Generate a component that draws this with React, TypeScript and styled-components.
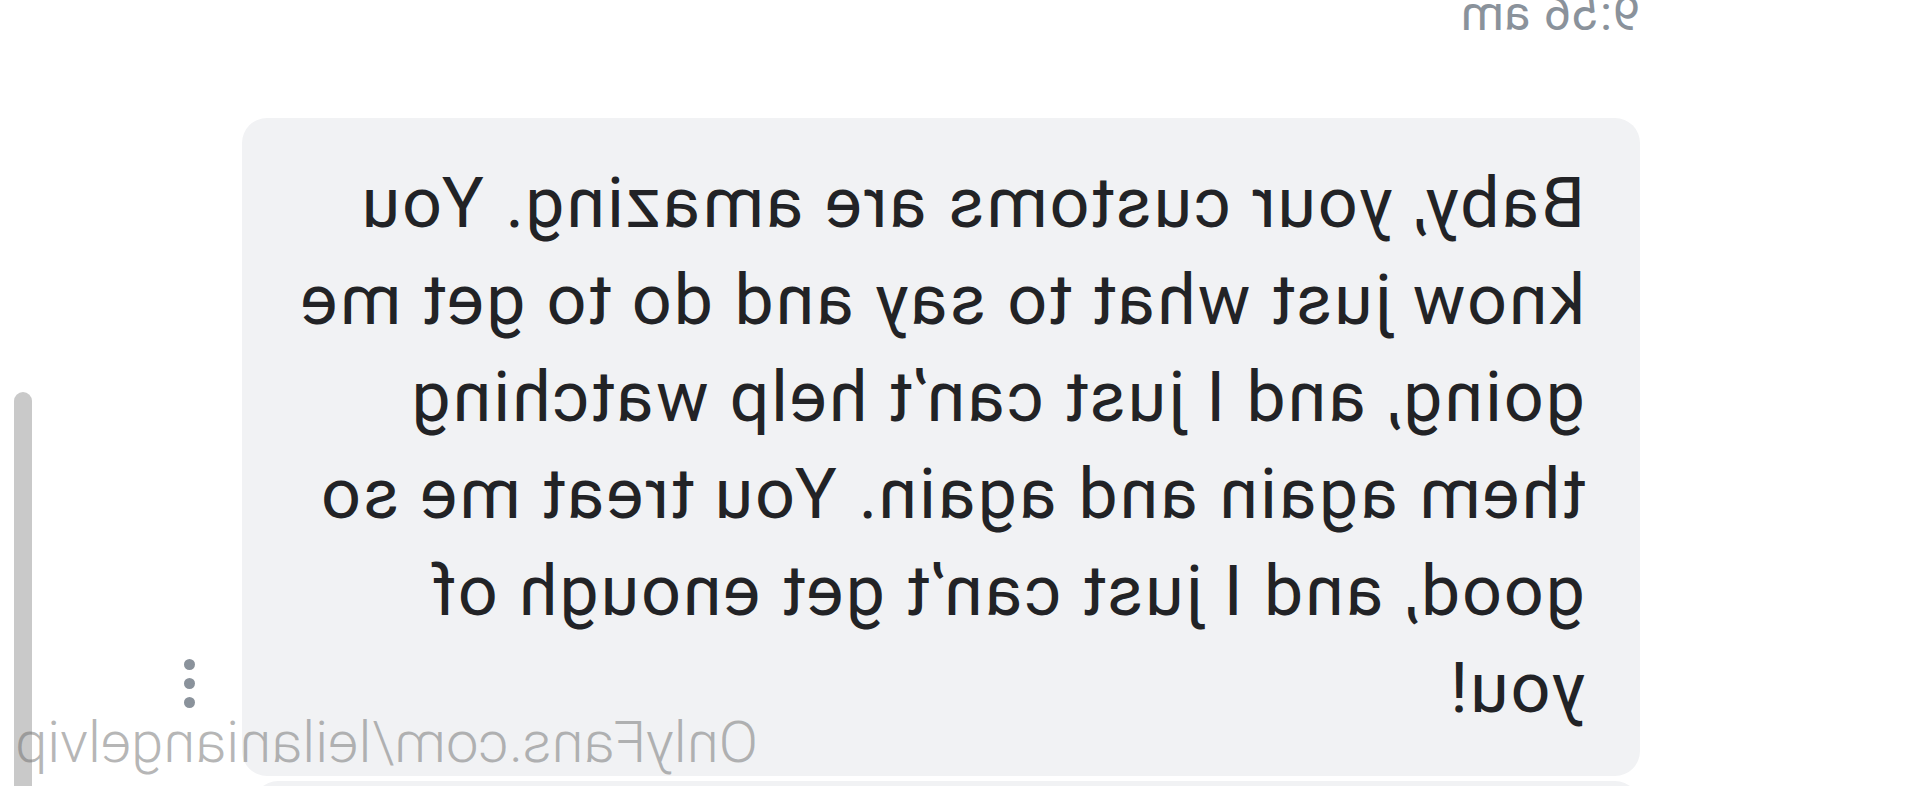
import React from "react";
import styled, { createGlobalStyle } from "styled-components";

const GlobalStyle = createGlobalStyle`
  html, body {
    margin: 0;
    padding: 0;
    background: #ffffff;
    overflow: hidden;
  }
  body {
    font-family: Roboto, "Liberation Sans", Arial, sans-serif;
  }
`;

// the whole screenshot is flipped left to right
const Screen = styled.div`
  position: relative;
  width: 1920px;
  height: 786px;
  overflow: hidden;
  background: #ffffff;
  transform: scaleX(-1);
`;

const Thread = styled.div`
  display: flex;
  flex-direction: column;
  padding-left: 280px;
`;

const Time = styled.div`
  margin-top: -10px;
  height: 128px;
  font-size: 49px;
  line-height: 48px;
  letter-spacing: 0.5px;
  color: #8a929b;
`;

const MessageRow = styled.div`
  display: flex;
  align-items: flex-end;
  gap: 47px;
`;

const Bubble = styled.div<{ $width: number }>`
  width: ${(p) => p.$width}px;
  box-sizing: border-box;
  padding: 37px 40px 39px 55px;
  background: #f1f2f4;
  border-radius: 25px;
  color: #222326;
  font-size: 70px;
  line-height: 97px;
  letter-spacing: 1.9px;
  white-space: nowrap;
`;

const Actions = styled.button`
  display: flex;
  flex-direction: column;
  gap: 8px;
  margin-bottom: 68px;
  padding: 0;
  border: none;
  background: none;

  span {
    width: 11px;
    height: 11px;
    border-radius: 50%;
    background: #8a929b;
  }
`;

const NextBubble = styled.div`
  margin-top: 5px;
  width: 1387px;
  height: 60px;
  background: #f1f2f4;
  border-radius: 25px;
`;

const ScrollThumb = styled.div`
  position: absolute;
  right: 14px;
  top: 392px;
  bottom: -20px;
  width: 18px;
  border-radius: 9px;
  background: #c9c9c9;
`;

const Watermark = styled.div`
  position: absolute;
  right: 15px;
  top: 707px;
  font-size: 58px;
  font-weight: 300;
  line-height: 70px;
  color: rgba(110, 110, 110, 0.5);
  white-space: nowrap;
`;

const lines = [
  "Baby, your customs are amazing. You",
  "know just what to say and do to get me",
  "going, and I just can\u2019t help watching",
  "them again and again. You treat me so",
  "good, and I just can\u2019t get enough of",
  "you!",
];

export default function App() {
  return (
    <>
      <GlobalStyle />
      <Screen>
        <Thread>
          <Time>9:56 am</Time>
          <MessageRow>
            <Bubble $width={1398}>
              {lines.map((l, i) => (
                <React.Fragment key={i}>
                  {l}
                  {i < lines.length - 1 && <br />}
                </React.Fragment>
              ))}
            </Bubble>
            <Actions aria-label="More">
              <span />
              <span />
              <span />
            </Actions>
          </MessageRow>
          <NextBubble />
        </Thread>
        <ScrollThumb />
        <Watermark>OnlyFans.com/leilaniangelvip</Watermark>
      </Screen>
    </>
  );
}
